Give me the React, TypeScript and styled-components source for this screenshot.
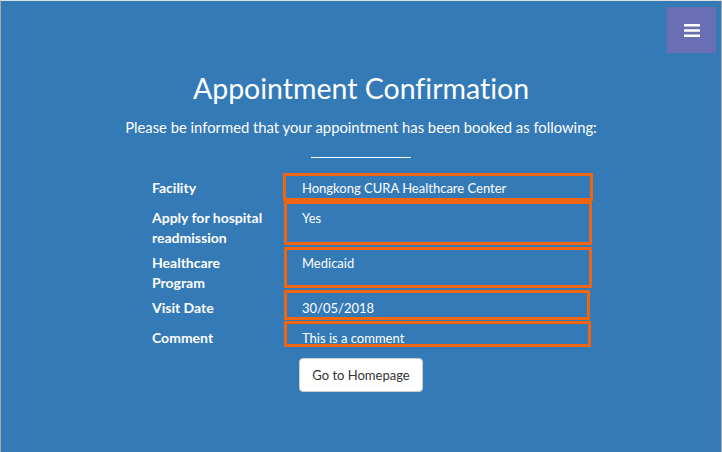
import React from "react";
import styled, { createGlobalStyle } from "styled-components";

type Detail = {
  label: string;
  value: string;
  box: { top: number; height: number; left: number; width: number };
};

const details: Detail[] = [
  { label: "Facility", value: "Hongkong CURA Healthcare Center", box: { top: -5, height: 28, left: -4, width: 310 } },
  { label: "Apply for hospital readmission", value: "Yes", box: { top: -7, height: 44, left: -3, width: 308 } },
  { label: "Healthcare Program", value: "Medicaid", box: { top: -6, height: 41, left: -3, width: 308 } },
  { label: "Visit Date", value: "30/05/2018", box: { top: -8, height: 30, left: -3, width: 306 } },
  { label: "Comment", value: "This is a comment", box: { top: -7, height: 26, left: -3, width: 307 } },
];

const App = () => {
  return (
    <>
      <GlobalStyle />
      <Page>
        <MenuToggle aria-label="menu">
          <svg width="16" height="13" viewBox="0 0 16 13">
            <rect x="0" y="0" width="16" height="2.6" rx="0.4" fill="#fff" />
            <rect x="0" y="5.2" width="16" height="2.6" rx="0.4" fill="#fff" />
            <rect x="0" y="10.4" width="16" height="2.6" rx="0.4" fill="#fff" />
          </svg>
        </MenuToggle>

        <Header>
          <Title>Appointment Confirmation</Title>
          <Lead>Please be informed that your appointment has been booked as following:</Lead>
          <SmallRule />
        </Header>

        <Details>
          {details.map((d) => (
            <Row key={d.label}>
              <LabelCol>
                <Label>{d.label}</Label>
              </LabelCol>
              <ValueCol>
                <Value>{d.value}</Value>
                <Highlight
                  $top={d.box.top}
                  $height={d.box.height}
                  $left={d.box.left}
                  $width={d.box.width}
                />
              </ValueCol>
            </Row>
          ))}
        </Details>

        <Actions>
          <HomeButton>Go to Homepage</HomeButton>
        </Actions>
      </Page>
    </>
  );
};

export default App;

const GlobalStyle = createGlobalStyle`
  html, body {
    margin: 0;
    padding: 0;
    height: 100%;
  }

  body {
    font-family: Lato, "Liberation Sans", sans-serif;
    font-variant-ligatures: none;
    background: #337ab7;
    border-top: 1px solid #e2e2e2;
    border-left: 1px solid #a8a8a8;
    border-right: 1px solid #a8a8a8;
    box-sizing: border-box;
    overflow: hidden;
  }
`;

const Page = styled.section`
  position: relative;
  min-height: 451px;
  background: #337ab7;
  color: #fff;
  padding-top: 71px;
  box-sizing: border-box;
`;

const MenuToggle = styled.button`
  position: absolute;
  top: 6px;
  right: 5px;
  width: 49px;
  height: 46px;
  border: 0;
  padding: 0;
  background: #6a6fb3;
  display: flex;
  align-items: center;
  justify-content: center;
  cursor: pointer;
`;

const Header = styled.div`
  text-align: center;
`;

const Title = styled.h2`
  margin: 0;
  font-size: 28.5px;
  line-height: 33px;
  font-weight: 400;
`;

const Lead = styled.p`
  margin: 11px 0 0;
  font-size: 14.8px;
  line-height: 22px;
  font-weight: 400;
`;

const SmallRule = styled.hr`
  width: 100px;
  margin: 19px auto 20px;
  border: 0;
  border-top: 1px solid #fff;
`;

const Details = styled.div`
  display: flex;
  flex-direction: column;
  padding-left: 151px;
`;

const Row = styled.div`
  display: flex;
  align-items: stretch;
`;

const LabelCol = styled.div`
  width: 135px;
`;

const Label = styled.label`
  display: block;
  width: 120px;
  margin-bottom: 5px;
  font-size: 14px;
  line-height: 20px;
  font-weight: 700;
`;

const ValueCol = styled.div`
  position: relative;
  width: 302px;
  padding-left: 15px;
`;

const Value = styled.p`
  margin: 0 0 10px;
  font-size: 13px;
  line-height: 20px;
`;

const Highlight = styled.div<{ $top: number; $height: number; $left: number; $width: number }>`
  position: absolute;
  top: ${(p) => p.$top}px;
  left: ${(p) => p.$left}px;
  width: ${(p) => p.$width}px;
  height: ${(p) => p.$height}px;
  border: 3px solid #f0650f;
  box-sizing: border-box;
  pointer-events: none;
`;

const Actions = styled.div`
  display: flex;
  justify-content: center;
`;

const HomeButton = styled.button`
  font-family: inherit;
  font-size: 13px;
  line-height: 20px;
  padding: 6px 12px;
  color: #333;
  background: #fff;
  border: 1px solid #ccc;
  border-radius: 4px;
  cursor: pointer;
`;
